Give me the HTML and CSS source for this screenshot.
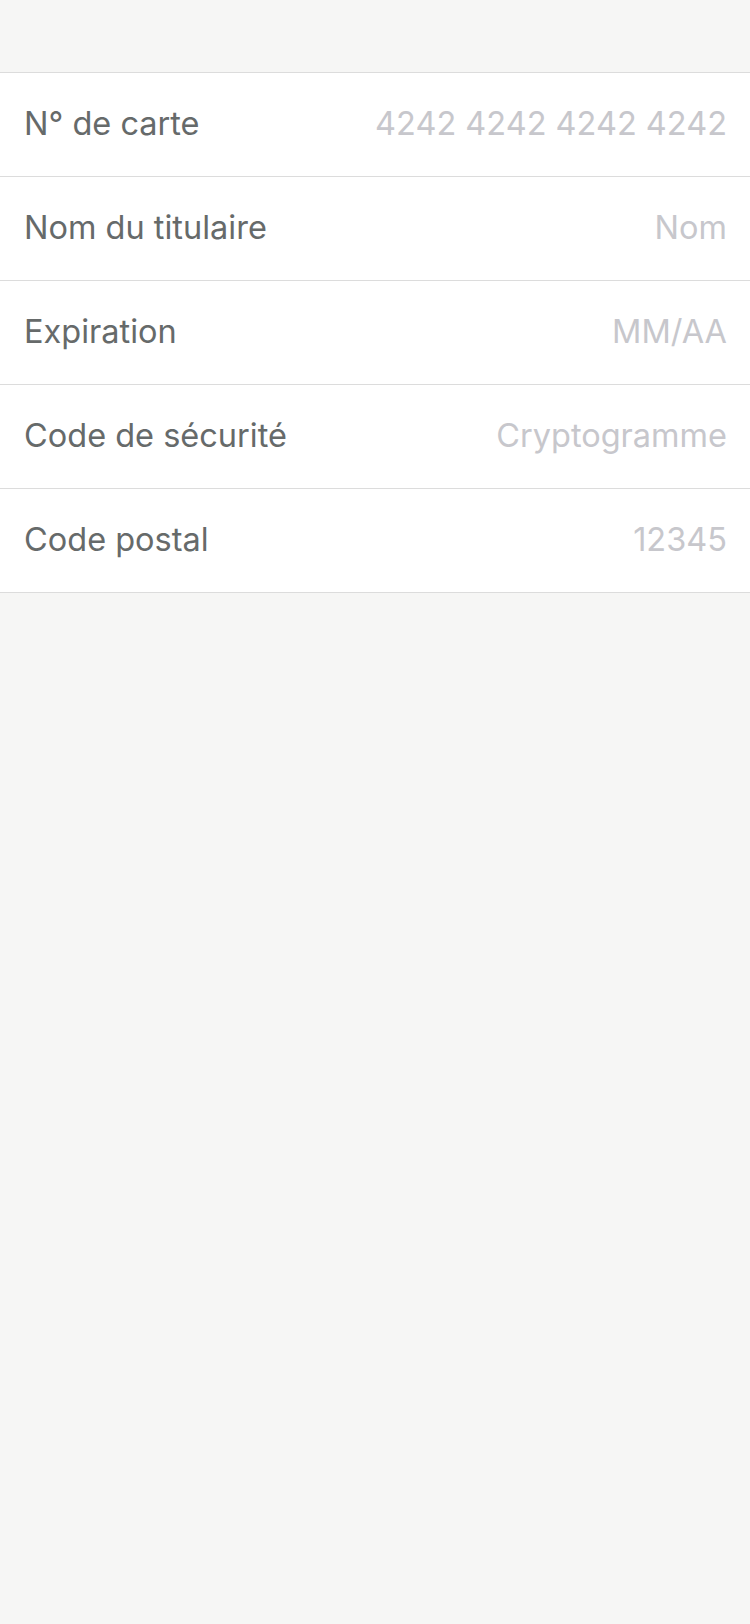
FILE: index.html
```html
<!DOCTYPE html>
<html lang="fr">
<head>
<meta charset="utf-8">
<title>Carte</title>
<link rel="stylesheet" href="styles.css">
</head>
<body>
<main class="screen">
  <div class="form">
    <label class="row"><span class="label">N° de carte</span><input class="field" placeholder="4242 4242 4242 4242"></label>
    <label class="row"><span class="label">Nom du titulaire</span><input class="field" placeholder="Nom"></label>
    <label class="row"><span class="label">Expiration</span><input class="field" placeholder="MM/AA"></label>
    <label class="row"><span class="label">Code de sécurité</span><input class="field" placeholder="Cryptogramme"></label>
    <label class="row"><span class="label">Code postal</span><input class="field" placeholder="12345"></label>
  </div>
</main>
</body>
</html>
```
FILE: styles.css
```css
html, body {
  margin: 0;
  padding: 0;
  background: #f6f6f5;
}
.screen {
  min-height: 1624px;
  padding-top: 72px;
  box-sizing: border-box;
  font-family: Inter, "Liberation Sans", sans-serif;
}
.form {
  background: #ffffff;
  border-top: 1px solid #dcdcdc;
}
.row {
  display: flex;
  align-items: center;
  justify-content: space-between;
  height: 103px;
  border-bottom: 1px solid #dcdcdc;
  padding: 0 23px 2px 24px;
  box-sizing: border-box;
  height: 104px;
}
.label {
  font-size: 32.5px;
  color: #666a6a;
  white-space: nowrap;
}
.field {
  flex: 1;
  min-width: 0;
  border: none;
  outline: none;
  background: transparent;
  text-align: right;
  font-family: inherit;
  font-size: 32.5px;
  color: #333;
  padding: 0;
}
.field::placeholder {
  color: #c7c7cc;
  opacity: 1;
}
```
